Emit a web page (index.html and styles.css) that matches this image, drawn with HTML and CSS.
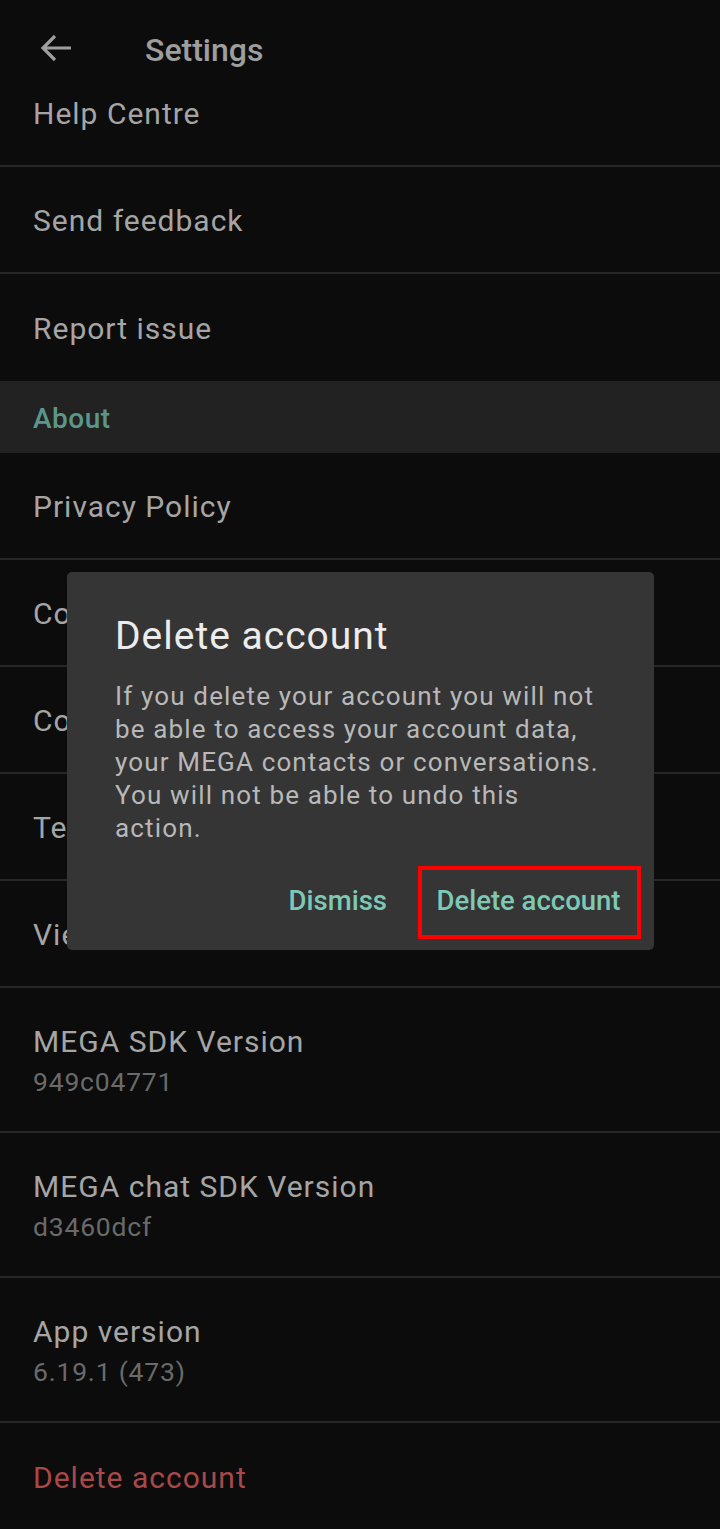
FILE: index.html
```html
<!DOCTYPE html>
<html>
<head>
<meta charset="utf-8">
<link rel="stylesheet" href="styles.css">
</head>
<body>
<div class="screen">
  <header class="topbar">
    <svg class="back" width="36" height="36" viewBox="0 0 36 36"><path d="M33 18H6M17 6L5 18L17 30" fill="none" stroke="#9e9e9e" stroke-width="3.2"/></svg>
    <span class="title">Settings</span>
  </header>
  <div class="row"><span class="label">Help Centre</span></div>
  <div class="row"><span class="label">Send feedback</span></div>
  <div class="row nodiv"><span class="label">Report issue</span></div>
  <div class="section">About</div>
  <div class="row"><span class="label">Privacy Policy</span></div>
  <div class="row"><span class="label">Cookie Policy</span></div>
  <div class="row"><span class="label">Code of conduct</span></div>
  <div class="row"><span class="label">Terms of Service</span></div>
  <div class="row"><span class="label">View source code</span></div>
  <div class="row tall"><span class="label">MEGA SDK Version</span><span class="sub">949c04771</span></div>
  <div class="row tall"><span class="label">MEGA chat SDK Version</span><span class="sub">d3460dcf</span></div>
  <div class="row tall"><span class="label">App version</span><span class="sub">6.19.1 (473)</span></div>
  <div class="row nodiv"><span class="label danger">Delete account</span></div>

  <div class="dialog">
    <h2 class="dlg-title">Delete account</h2>
    <p class="dlg-body">If you delete your account you will not be able to access your account data, your MEGA contacts or conversations. You will not be able to undo this action.</p>
    <div class="dlg-actions">
      <span class="btn">Dismiss</span>
      <span class="btn highlighted">Delete account</span>
    </div>
  </div>
</div>
</body>
</html>
```
FILE: styles.css
```css
html, body {
  margin: 0;
  padding: 0;
  background: #0c0c0c;
}
body {
  font-family: Roboto, "Noto Sans", sans-serif;
}
.screen {
  position: relative;
  width: 720px;
  height: 1529px;
  overflow: hidden;
  background: #0c0c0c;
}
.topbar {
  position: relative;
  z-index: 1;
  height: 100px;
  margin-bottom: -40px;
  box-sizing: border-box;
  display: flex;
  align-items: flex-start;
  padding: 30px 0 0 38px;
}
.back {
  display: block;
}
.title {
  margin-left: 71px;
  font-size: 32px;
  font-weight: 500;
  color: #9e9e9e;
  line-height: 38px;
  margin-top: 1px;
}
.row {
  height: 107px;
  box-sizing: border-box;
  border-bottom: 2px solid #262626;
  padding-left: 33px;
  padding-top: 2px;
  display: flex;
  flex-direction: column;
  justify-content: center;
}
.row.nodiv {
  border-bottom: none;
}
.row.tall {
  height: 145px;
  padding-top: 5px;
}
.label {
  font-size: 30px;
  letter-spacing: 1px;
  color: #a5a5a5;
  line-height: 40px;
}
.sub {
  font-size: 26.5px;
  letter-spacing: 0.8px;
  color: #6a6a6a;
  line-height: 40px;
}
.danger {
  color: #a94848;
}
.section {
  height: 72px;
  background: #222222;
  color: #5a978a;
  font-size: 28px;
  letter-spacing: 0.5px;
  font-weight: 500;
  padding-left: 33px;
  display: flex;
  align-items: center;
  box-sizing: border-box;
  padding-top: 2px;
}
.dialog {
  position: absolute;
  left: 67px;
  top: 572px;
  width: 587px;
  height: 378px;
  box-sizing: border-box;
  background: #353535;
  border-radius: 5px;
  padding: 40px 13px 11px 48px;
  display: flex;
  flex-direction: column;
}
.dlg-title {
  margin: 0;
  font-size: 39px;
  letter-spacing: 1px;
  font-weight: 400;
  color: #ececec;
  line-height: 48px;
}
.dlg-body {
  margin: 20px 0 0 0;
  width: 496px;
  font-size: 26px;
  letter-spacing: 1.15px;
  line-height: 33px;
  color: #b8b8b8;
}
.dlg-actions {
  margin-top: auto;
  display: flex;
  justify-content: flex-end;
  align-items: center;
  gap: 31px;
}
.btn {
  font-size: 27.5px;
  font-weight: 500;
  color: #7ccab5;
  line-height: 36px;
  padding-bottom: 4px;
}
.btn.highlighted {
  height: 73px;
  width: 223px;
  box-sizing: border-box;
  border: 4px solid #ff0000;
  display: flex;
  align-items: center;
  justify-content: center;
  padding: 0 2px 4px 0;
}
```
